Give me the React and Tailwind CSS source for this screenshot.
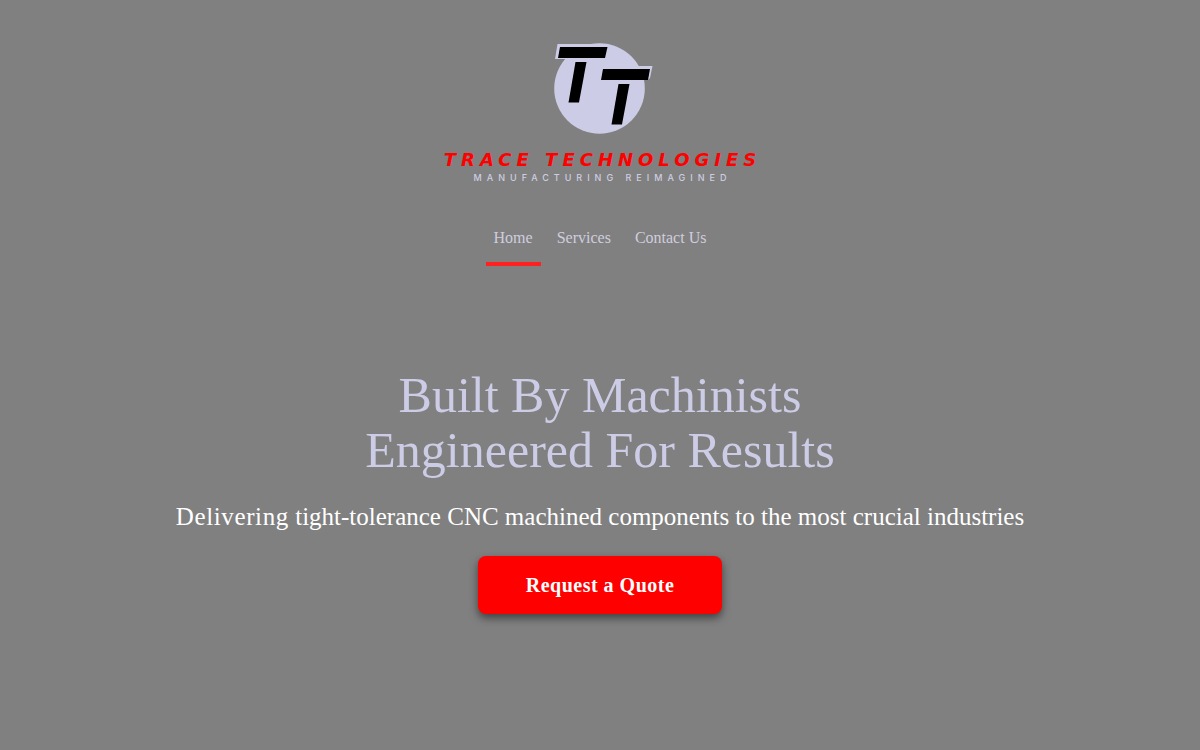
import { useState } from "react";

const links = [
  { label: "Home", href: "#home" },
  { label: "Services", href: "#services" },
  { label: "Contact Us", href: "#contact" },
];

const Logo = () => {
  return (
    <a href="#home" className="flex flex-col items-center">
      <svg width="108" height="92" viewBox="-8 0 108 92" aria-hidden="true">
        <circle cx="45.5" cy="46.5" r="45.3" fill="#cccce6" />
        <path d="M3.5 2H50L47 17H1Z" fill="#cccce6" />
        <path d="M48 24H98.5L96 36L94 38H48Z" fill="#cccce6" />
        <path d="M6 5H53.5L51 16H4Z" />
        <path d="M21.5 20H32.5L25 60.5H14.5Z" />
        <path d="M49 27H96L94 38H47Z" />
        <path d="M64.5 42H75.5L68 82.5H57.5Z" />
      </svg>
      <span className="mt-4 pl-[5px] whitespace-nowrap font-['DejaVu_Sans',sans-serif] text-[18px] leading-5 font-bold italic tracking-[5px] text-[#ff0000]">
        TRACE TECHNOLOGIES
      </span>
      <span className="pl-[5px] whitespace-nowrap font-['Inter',sans-serif] text-[9px] leading-4 font-medium tracking-[5px] text-[#cfcde0]">
        MANUFACTURING REIMAGINED
      </span>
    </a>
  );
};

const App = () => {
  const [active, setActive] = useState("Home");

  return (
    <div className="min-h-screen bg-[#808080] font-['Liberation_Serif',serif]">
      <header className="flex flex-col items-center pt-[42px]">
        <Logo />
        <nav className="mt-[30px] flex gap-2">
          {links.map((link) => (
            <a
              key={link.label}
              href={link.href}
              onClick={() => setActive(link.label)}
              className={`border-b-4 px-2 pt-2 pb-2.5 text-base leading-7 text-[#d0cdde] ${
                active === link.label ? "border-[#ff2020]" : "border-transparent"
              }`}
            >
              {link.label}
            </a>
          ))}
        </nav>
      </header>

      <main className="flex flex-col items-center px-4 pt-[102px] text-center">
        <h1 className="text-[50px] leading-[55px] text-[#cccce6]">
          Built By Machinists
          <br />
          Engineered For Results
        </h1>
        <p className="mt-[21px] text-[25px] leading-9 text-white">
          <span className="tracking-wide">Delivering</span> tight-tolerance CNC
          machined components to the most crucial industries
        </p>
        <button
          type="button"
          className="mt-[21px] rounded-lg bg-[#ff0000] px-12 py-[15px] text-xl leading-7 font-bold tracking-wide text-white shadow-[0_4px_8px_rgba(0,0,0,0.5)]"
        >
          Request a Quote
        </button>
      </main>
    </div>
  );
};

export default App;
